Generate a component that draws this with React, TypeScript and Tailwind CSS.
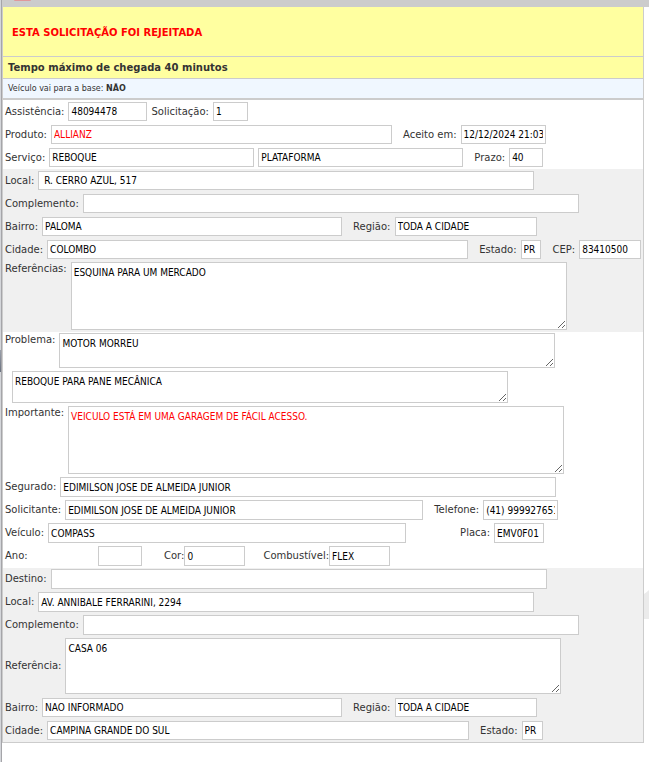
import { useId } from 'react';
import type { ReactNode } from 'react';
import { clsx } from 'clsx';

interface FieldProps {
  label?: string;
  hiddenLabel?: string;
  value?: string;
  width?: string;
  labelWidth?: string;
  height?: string;
  danger?: boolean;
  tight?: boolean;
}

const controlClass =
  "min-w-0 rounded-none border border-[#ccc] bg-white px-0.5 font-['DejaVu_Sans_Condensed','DejaVu_Sans',sans-serif] text-[10px] outline-none";

function Field({
  label,
  hiddenLabel,
  value = '',
  width = 'w-[496px]',
  labelWidth,
  height = 'h-[19px]',
  danger,
  tight,
}: FieldProps) {
  const id = useId();

  return (
    <div className={clsx('flex min-w-0 items-center', !tight && 'gap-1')}>
      {label && (
        <label htmlFor={id} className={clsx('shrink-0 whitespace-nowrap', labelWidth)}>
          {label}
        </label>
      )}
      <input
        id={id}
        type="text"
        aria-label={hiddenLabel}
        defaultValue={value}
        className={clsx(controlClass, 'leading-[17px]', width, height, danger ? 'text-[#f00]' : 'text-black')}
      />
    </div>
  );
}

interface AreaProps {
  label?: string;
  hiddenLabel?: string;
  value: string;
  height: string;
  center?: boolean;
  danger?: boolean;
}

function Area({ label, hiddenLabel, value, height, center, danger }: AreaProps) {
  const id = useId();

  return (
    <div className={clsx('flex min-w-0 gap-1', center ? 'items-center' : 'items-start')}>
      {label && (
        <label htmlFor={id} className="shrink-0 whitespace-nowrap">
          {label}
        </label>
      )}
      <textarea
        id={id}
        aria-label={hiddenLabel}
        defaultValue={value}
        className={clsx(controlClass, 'w-[496px] resize py-[3px] leading-[14px]', height, danger ? 'text-[#f00]' : 'text-black')}
      />
    </div>
  );
}

function Row({ children, tall }: { children: ReactNode; tall?: boolean }) {
  return <div className={clsx('flex gap-[11px] px-0.5', tall ? 'pt-px pb-0.5' : 'py-0.5')}>{children}</div>;
}

export default function App() {
  return (
    <div className="flex min-h-screen bg-white font-['DejaVu_Sans',Verdana,sans-serif] text-[10px] leading-[14px] text-[#333]">
      {/* Edge of the side frame */}
      <div className="flex w-[2px] shrink-0 flex-col border-r border-[#a5a5a9] bg-[#d4d6da]">
        <div className="mt-[350px] h-[22px] bg-gradient-to-b from-[#9aa0aa] to-[#6b7280]" />
      </div>

      <main className="min-w-0 flex-1">
        <div className="h-[7px] bg-[#ccc]">
          <div className="ml-3 h-px w-[17px] rounded-b-full bg-[#e0989b]" />
        </div>

        <div className="flex">
          <form className="min-w-0 flex-1 border-x border-b border-[#ccc]">
            {/* Avisos */}
            <div className="border-b border-[#ccc] bg-[#ffffa0] px-[9px] pt-[19px] pb-[17px]">
              <h1 className="text-[10px] leading-[13px] font-bold text-[#f00]">ESTA SOLICITAÇÃO FOI REJEITADA</h1>
            </div>
            <div className="border-b border-[#ccc] bg-[#ffffa0] px-[5px] py-1">
              <h2 className="text-[10px] leading-[13px] font-bold">Tempo máximo de chegada 40 minutos</h2>
            </div>
            <p className="border-b-2 border-[#ccc] bg-[#f0f7ff] px-[5px] py-[3px] text-[8px] leading-[13px]">
              Veículo vai para a base: <strong>NÃO</strong>
            </p>

            {/* Solicitação */}
            <section>
              <Row>
                <div className="flex min-w-0 gap-1">
                  <Field label="Assistência:" value="48094478" width="w-[79px]" />
                  <Field label="Solicitação:" value="1" width="w-[35px]" />
                </div>
              </Row>
              <Row>
                <Field label="Produto:" value="ALLIANZ" width="w-[341px]" danger />
                <Field label="Aceito em:" value="12/12/2024 21:03:15" width="w-[85px]" />
              </Row>
              <Row>
                <div className="flex min-w-0 gap-1">
                  <Field label="Serviço:" value="REBOQUE" width="w-[205px]" />
                  <Field hiddenLabel="Tipo de serviço" value="PLATAFORMA" width="w-[205px]" />
                </div>
                <Field label="Prazo:" value="40" width="w-[34px]" />
              </Row>
            </section>

            {/* Origem */}
            <section className="bg-[#f0f0f0]">
              <Row>
                <Field label="Local:" value=" R. CERRO AZUL, 517" />
              </Row>
              <Row>
                <Field label="Complemento:" />
              </Row>
              <Row>
                <Field label="Bairro:" value="PALOMA" width="w-[300px]" />
                <Field label="Região:" value="TODA A CIDADE" width="w-[142px]" />
              </Row>
              <Row>
                <Field label="Cidade:" value="COLOMBO" width="w-[422px]" />
                <Field label="Estado:" value="PR" width="w-[21px]" />
                <Field label="CEP:" value="83410500" width="w-[62px]" />
              </Row>
              <Row tall>
                <Area label="Referências:" value="ESQUINA PARA UM MERCADO" height="h-[68px]" />
              </Row>
            </section>

            {/* Problema, segurado e veículo */}
            <section>
              <Row tall>
                <Area label="Problema:" value="MOTOR MORREU" height="h-[35px]" />
              </Row>
              <div className="pl-[7px]">
                <Row tall>
                  <Area hiddenLabel="Detalhes do problema" value="REBOQUE PARA PANE MECÂNICA" height="h-[32px]" />
                </Row>
              </div>
              <Row tall>
                <Area label="Importante:" value="VEICULO ESTÁ EM UMA GARAGEM DE FÁCIL ACESSO." height="h-[68px]" danger />
              </Row>
              <Row tall>
                <Field label="Segurado:" value="EDIMILSON JOSE DE ALMEIDA JUNIOR" height="h-[20px]" />
              </Row>
              <Row tall>
                <Field label="Solicitante:" value="EDIMILSON JOSE DE ALMEIDA JUNIOR" width="w-[358px]" height="h-[20px]" />
                <Field label="Telefone:" value="(41) 999927651" width="w-[75px]" height="h-[20px]" />
              </Row>
              <Row tall>
                <Field label="Veículo:" value="COMPASS" width="w-[358px]" height="h-[20px]" />
                <div className="ml-[43px]">
                  <Field label="Placa:" value="EMV0F01" width="w-[50px]" height="h-[20px]" />
                </div>
              </Row>
              <Row tall>
                <Field label="Ano:" labelWidth="w-[89px]" width="w-[44px]" height="h-[20px]" />
                <div className="ml-[11px] flex gap-[18px]">
                  <Field label="Cor:" value="0" width="w-[61px]" height="h-[20px]" tight />
                  <Field label="Combustível:" value="FLEX" width="w-[61px]" height="h-[20px]" tight />
                </div>
              </Row>
            </section>

            {/* Destino */}
            <section className="bg-[#f0f0f0]">
              <Row tall>
                <Field label="Destino:" height="h-[20px]" />
              </Row>
              <Row tall>
                <Field label="Local:" value="AV. ANNIBALE FERRARINI, 2294" height="h-[20px]" />
              </Row>
              <Row tall>
                <Field label="Complemento:" height="h-[20px]" />
              </Row>
              <Row tall>
                <Area label="Referência:" value="CASA 06" height="h-[56px]" center />
              </Row>
              <Row>
                <Field label="Bairro:" value="NÃO INFORMADO" width="w-[300px]" />
                <Field label="Região:" value="TODA A CIDADE" width="w-[142px]" />
              </Row>
              <Row>
                <Field label="Cidade:" value="CAMPINA GRANDE DO SUL" width="w-[422px]" />
                <Field label="Estado:" value="PR" width="w-[21px]" />
              </Row>
            </section>
          </form>

          {/* Watermark sliver */}
          <div className="w-[5px] shrink-0 pt-[583px]">
            <svg viewBox="0 0 5 29" className="h-[29px] w-[5px]" aria-hidden="true">
              <path d="M0 4 Q3 2 5 0 V29 Q2 29 0 29 Z" fill="#ebebeb" />
            </svg>
          </div>
        </div>
      </main>
    </div>
  );
}
